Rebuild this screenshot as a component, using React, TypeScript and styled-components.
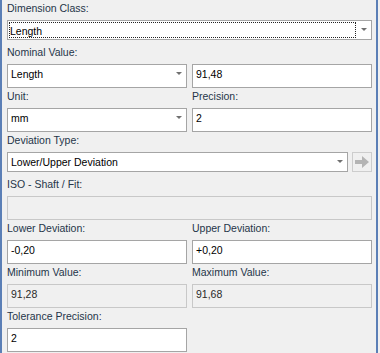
import React from 'react';
import styled, { createGlobalStyle } from 'styled-components';

const GlobalStyle = createGlobalStyle`
  html, body {
    margin: 0;
    padding: 0;
    background: #f0f0f0;
  }
  body {
    font-family: 'Liberation Sans', Arial, sans-serif;
    font-size: 10.5px;
  }
`;

const Panel = styled.div`
  width: 378px;
  height: 353px;
  box-sizing: border-box;
  background: #f0f0f0;
  border-left: 2px solid #5b7fb6;
  border-right: 2px solid #5b7fb6;
  padding: 0 4px 0 5px;
`;

const Grid = styled.div`
  display: grid;
  grid-template-columns: 180px 180px;
  column-gap: 5px;
`;

const Field = styled.div<{ $span?: boolean }>`
  grid-column: ${(p) => (p.$span ? '1 / span 2' : 'auto')};
  display: flex;
  flex-direction: column;
  height: 44px;
`;

const Label = styled.div`
  height: 16px;
  line-height: 17px;
  margin-bottom: 4px;
  color: #253549;
  white-space: nowrap;
`;

const Row = styled.div`
  display: flex;
  gap: 4px;
`;

const Box = styled.div<{ $readOnly?: boolean }>`
  position: relative;
  flex: 1;
  height: 20px;
  box-sizing: border-box;
  border: 1px solid ${(p) => (p.$readOnly ? '#c8c8c8' : '#a5a5a5')};
  background: ${(p) => (p.$readOnly ? '#f0f0f0' : '#ffffff')};
  color: ${(p) => (p.$readOnly ? '#2a2a2a' : '#000000')};
  line-height: 18px;
  padding-left: 2px;
  white-space: nowrap;
`;

const Focus = styled.div`
  position: absolute;
  left: 1px;
  top: 1px;
  bottom: 1px;
  right: 15px;
  border: 1px dotted #222;
  line-height: 16px;
`;

const Caret = styled.span`
  position: absolute;
  right: 4px;
  top: 7px;
  width: 0;
  height: 0;
  border-left: 3px solid transparent;
  border-right: 3px solid transparent;
  border-top: 3px solid #707070;
`;

const SquareButton = styled.div`
  width: 20px;
  height: 20px;
  box-sizing: border-box;
  border: 1px solid #cdcdcd;
  background: #f0f0f0;
  display: flex;
  align-items: center;
  justify-content: center;
`;

const Text = styled.span`
  padding-left: 1px;
`;

function Combo({ value, focused }: { value: string; focused?: boolean }) {
  return (
    <Box>
      {focused ? <Focus>{value}</Focus> : <Text>{value}</Text>}
      <Caret />
    </Box>
  );
}

export default function App() {
  return (
    <>
      <GlobalStyle />
      <Panel>
        <Grid>
          <Field $span>
            <Label>Dimension Class:</Label>
            <Row>
              <Combo value="Length" focused />
            </Row>
          </Field>
          <Field>
            <Label>Nominal Value:</Label>
            <Combo value="Length" />
          </Field>
          <Field>
            <Label>&nbsp;</Label>
            <Box>
              <Text>91,48</Text>
            </Box>
          </Field>
          <Field>
            <Label>Unit:</Label>
            <Combo value="mm" />
          </Field>
          <Field>
            <Label>Precision:</Label>
            <Box>
              <Text>2</Text>
            </Box>
          </Field>
          <Field $span>
            <Label>Deviation Type:</Label>
            <Row>
              <Combo value="Lower/Upper Deviation" />
              <SquareButton>
                <svg width="16" height="14" viewBox="0 0 16 14">
                  <path d="M1 5 H8 V1 L15 7 L8 13 V9 H1 Z" fill="#b4b4b4" />
                </svg>
              </SquareButton>
            </Row>
          </Field>
          <Field $span>
            <Label>ISO - Shaft / Fit:</Label>
            <Box $readOnly />
          </Field>
          <Field>
            <Label>Lower Deviation:</Label>
            <Box>
              <Text>-0,20</Text>
            </Box>
          </Field>
          <Field>
            <Label>Upper Deviation:</Label>
            <Box>
              <Text>+0,20</Text>
            </Box>
          </Field>
          <Field>
            <Label>Minimum Value:</Label>
            <Box $readOnly>
              <Text>91,28</Text>
            </Box>
          </Field>
          <Field>
            <Label>Maximum Value:</Label>
            <Box $readOnly>
              <Text>91,68</Text>
            </Box>
          </Field>
          <Field>
            <Label>Tolerance Precision:</Label>
            <Box>
              <Text>2</Text>
            </Box>
          </Field>
        </Grid>
      </Panel>
    </>
  );
}
